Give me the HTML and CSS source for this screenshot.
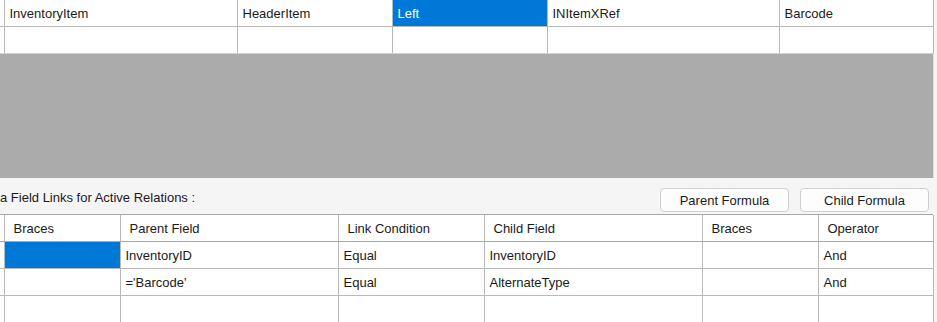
FILE: index.html
```html
<!DOCTYPE html>
<html lang="en">
<head>
  <meta charset="UTF-8" />
  <title>Relations</title>
  <link rel="stylesheet" href="styles.css">
</head>
<body>

  <!-- Active relations grid -->
  <div class="relations">
    <table class="grid top-grid">
      <colgroup>
        <col style="width:4px"><col style="width:233px"><col style="width:155px">
        <col style="width:155px"><col style="width:232px"><col style="width:154px">
      </colgroup>
      <tr class="head">
        <td class="stub"></td>
        <td>InventoryItem</td>
        <td>HeaderItem</td>
        <td class="selected">Left</td>
        <td>INItemXRef</td>
        <td>Barcode</td>
      </tr>
      <tr>
        <td class="stub"></td><td></td><td></td><td></td><td></td><td></td>
      </tr>
    </table>
  </div>

  <div class="toolbar">
    <span class="caption">a Field Links for Active Relations :</span>
    <div class="actions">
      <button class="btn">Parent Formula</button>
      <button class="btn">Child Formula</button>
    </div>
  </div>

  <!-- Field links grid -->
  <table class="grid links-grid">
    <colgroup>
      <col style="width:4px"><col style="width:116px"><col style="width:218px">
      <col style="width:146px"><col style="width:218px"><col style="width:116px">
      <col style="width:115px">
    </colgroup>
    <tr class="head">
      <td class="stub"></td>
      <td>Braces</td>
      <td>Parent Field</td>
      <td>Link Condition</td>
      <td>Child Field</td>
      <td>Braces</td>
      <td>Operator</td>
    </tr>
    <tr>
      <td class="stub"></td>
      <td class="selected"></td>
      <td>InventoryID</td>
      <td>Equal</td>
      <td>InventoryID</td>
      <td></td>
      <td>And</td>
    </tr>
    <tr>
      <td class="stub"></td>
      <td></td>
      <td>='Barcode'</td>
      <td>Equal</td>
      <td>AlternateType</td>
      <td></td>
      <td>And</td>
    </tr>
    <tr>
      <td class="stub"></td><td></td><td></td><td></td><td></td><td></td><td></td>
    </tr>
  </table>

</body>
</html>
```

FILE: styles.css
```css
html, body {
  margin: 0;
  padding: 0;
  overflow: hidden;
}

body {
  font-family: "Liberation Sans", Arial, sans-serif;
  font-size: 13px;
  color: #1a1a1a;
  background-color: #f5f5f5;
  width: 937px;
  height: 322px;
}

/* Grids */
.grid {
  border-collapse: collapse;
  table-layout: fixed;
  width: 933px;
  background-color: #fff;
}

.grid td {
  border: 1px solid #b9b9b9;
  padding: 0 5px;
  white-space: nowrap;
  overflow: hidden;
  height: 26px;
}

.grid td.stub {
  padding: 0;
  border-left: none;
}

.grid tr:first-child td {
  border-top: none;
}

.grid td.selected {
  background-color: #0078d7;
  color: #fff;
}

/* Top grid with empty area */
.relations {
  width: 933px;
  height: 178px;
  background-color: #ababab;
  border-right: 1px solid #e0e0e0;
}

.top-grid tr.head td {
  height: 26px;
}

.top-grid tr:last-child td {
  border-bottom: 1px solid #cfcfcf;
}

/* Caption + buttons */
.toolbar {
  display: flex;
  align-items: center;
  justify-content: space-between;
  height: 37px;
  width: 933px;
  border-bottom: 1px solid #a9a9a9;
  box-sizing: border-box;
}

.caption {
  margin-top: 2px;
}

.actions {
  display: flex;
  gap: 11px;
  margin-top: 8px;
  margin-right: 4px;
}

.btn {
  font-family: inherit;
  font-size: 13px;
  color: #1a1a1a;
  width: 129px;
  height: 24px;
  background-color: #fdfdfd;
  border: 1px solid #cfcfcf;
  border-radius: 4px;
  padding: 0;
}

/* Bottom grid */
.links-grid tr.head td {
  padding-left: 9px;
  border-bottom: 1px solid #a9a9a9;
}

.links-grid tr td {
  height: 26px;
}
```
